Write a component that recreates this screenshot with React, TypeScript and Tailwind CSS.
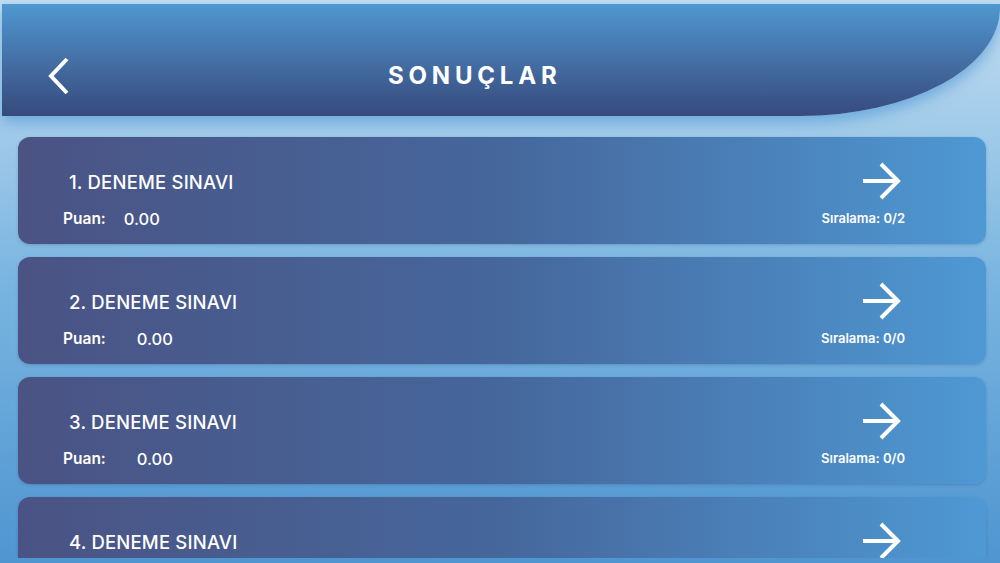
type Result = {
  title: string;
  score: string;
  rank: string;
  scoreGap: string;
};

const results: Result[] = [
  { title: '1. DENEME SINAVI', score: '0.00', rank: 'Sıralama: 0/2', scoreGap: 'ml-[18px]' },
  { title: '2. DENEME SINAVI', score: '0.00', rank: 'Sıralama: 0/0', scoreGap: 'ml-[31px]' },
  { title: '3. DENEME SINAVI', score: '0.00', rank: 'Sıralama: 0/0', scoreGap: 'ml-[31px]' },
  { title: '4. DENEME SINAVI', score: '0.00', rank: 'Sıralama: 0/0', scoreGap: 'ml-[31px]' },
];

function ArrowRight() {
  return (
    <svg width="40" height="40" viewBox="0 0 40 40" fill="none" stroke="white" strokeWidth={4}>
      <path d="M1 20H37" />
      <path d="M19 3L36 20L19 37" />
    </svg>
  );
}

function ResultCard({ item }: { item: Result }) {
  return (
    <div className="h-[107px] shrink-0 rounded-[12px] bg-gradient-to-r from-[#4a5384] via-[#45679c] to-[#4e99d4] shadow-[0_1px_3px_rgba(30,60,110,0.25)] flex justify-between text-white">
      {/* Title + score */}
      <div className="pl-[45px] pt-[33px]">
        <div className="pl-[6px] text-[18.5px] leading-6 font-medium tracking-[0.01em]">{item.title}</div>
        <div className="mt-[15px] flex items-center leading-5">
          <span className="text-[15.5px] font-semibold">Puan:</span>
          <span className={`${item.scoreGap} text-[16.5px] font-medium`}>{item.score}</span>
        </div>
      </div>

      {/* Arrow + rank */}
      <div className="pr-[81px] pt-[24px] flex flex-col items-end">
        <div className="mr-[3px]">
          <ArrowRight />
        </div>
        <div className="mt-[9px] text-[13px] leading-4 font-semibold">{item.rank}</div>
      </div>
    </div>
  );
}

export default function App() {
  return (
    <div className="w-[1000px] h-[563px] overflow-hidden font-['Inter',sans-serif] bg-gradient-to-b from-[#c3ddf0] via-[#79b5e0] to-[#4f95d0] pt-[4px]">
      {/* Header */}
      <div className="relative z-10 ml-[2px] h-[112px] pt-[32px] flex items-center rounded-br-[200px_108px] bg-gradient-to-b from-[#4f98d0] to-[#374a7d] shadow-[0_6px_14px_rgba(60,140,210,0.55)] text-white">
        <svg className="ml-[44px]" width="24" height="40" viewBox="0 0 24 40" fill="none" stroke="white" strokeWidth={4}>
          <path d="M21 3L5 20L21 37" />
        </svg>
        <h1 className="ml-[318px] text-[24px] font-bold tracking-[0.2em]">SONUÇLAR</h1>
      </div>

      {/* List */}
      <div className="h-[442px] overflow-hidden pl-[18px] pr-[14px] pt-[21px] flex flex-col gap-[13px]">
        {results.map((item) => (
          <ResultCard key={item.title} item={item} />
        ))}
      </div>
    </div>
  );
}
